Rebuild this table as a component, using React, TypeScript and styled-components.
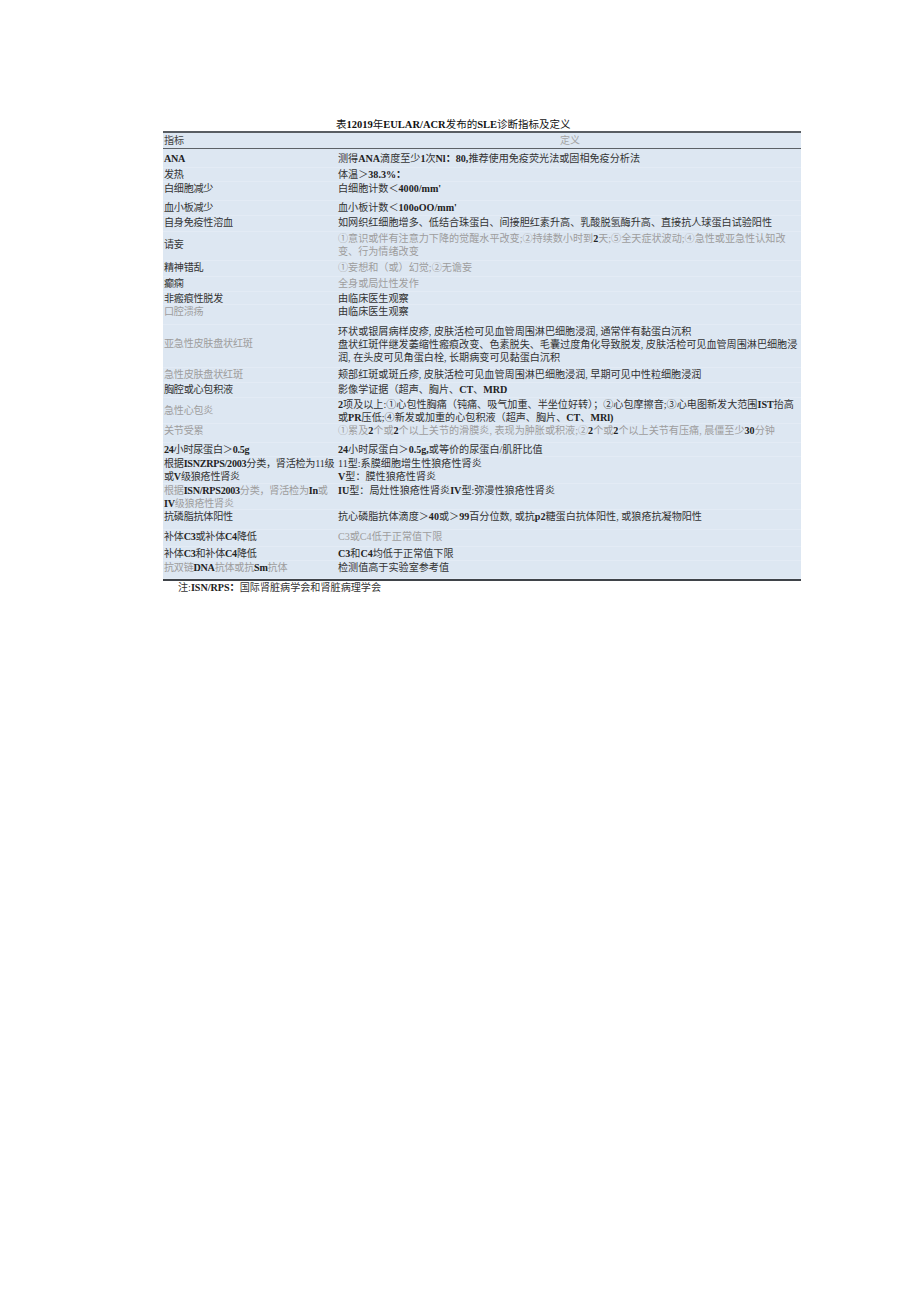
import React from 'react';
import styled, { createGlobalStyle } from 'styled-components';

const GlobalStyle = createGlobalStyle`
  html, body {
    margin: 0;
    padding: 0;
    background: #fff;
  }
  body {
    font-family: "Liberation Serif", "Noto Sans CJK SC", serif;
  }
`

const Page = styled.div`
  width: 920px;
  min-height: 1301px;
  padding-top: 118px;
  box-sizing: border-box;
  display: flex;
  flex-direction: column;
  align-items: flex-start;
`

const TableWrap = styled.div`
  margin-left: 163px;
  width: 638px;
  display: flex;
  flex-direction: column;
`

const Title = styled.div`
  padding-left: 173px;
  height: 13px;
  line-height: 13px;
  font-size: 10.5px;
  color: #111;
  white-space: nowrap;
`

const TitleLatin = styled.b`
  font-weight: 700;
`

const Table = styled.div`
  display: flex;
  flex-direction: column;
  background: #dde7f2;
  border-top: 2px solid #585d63;
  border-bottom: 2px solid #3f4349;
`

const HeaderRow = styled.div`
  display: grid;
  grid-template-columns: 175px 1fr;
  height: 16px;
  line-height: 15px;
  font-size: 10.1px;
  border-bottom: 1.5px solid #5c6167;
  box-sizing: border-box;
`

const HeaderCell = styled.div<{ $center?: boolean }>`
  padding-left: 1px;
  color: ${p => (p.$center ? '#a3a3a3' : '#444')};
  text-align: ${p => (p.$center ? 'center' : 'left')};
`

const Body = styled.div`
  display: flex;
  flex-direction: column;
  padding-top: 3px;
`

const Row = styled.div<{ $h: number }>`
  display: grid;
  grid-template-columns: 175px 1fr;
  align-items: start;
  height: ${p => p.$h}px;
  box-sizing: border-box;
  border-bottom: 1px solid #e3ebf5;
  font-size: 10.1px;
  line-height: 13px;
`

const Label = styled.div<{ $gray?: boolean; $offset?: number }>`
  padding-left: 1px;
  padding-top: ${p => p.$offset ?? 0}px;
  color: ${p => (p.$gray ? '#9d9d9d' : '#333')};
  letter-spacing: -0.25px;
  white-space: nowrap;
`

const Definition = styled.div<{ $gray?: boolean }>`
  color: ${p => (p.$gray ? '#9d9d9d' : '#333')};
  white-space: nowrap;
`

const Line = styled.div`
  height: 13px;
`

const B = styled.b`
  font-weight: 700;
  color: #222;
`

const Note = styled.div`
  padding-left: 15px;
  font-size: 10.1px;
  line-height: 13px;
  color: #333;
  white-space: nowrap;
`

type Item = {
  h: number
  label: React.ReactNode[]
  def: React.ReactNode[]
  labelGray?: boolean
  defGray?: boolean
  offset?: number
}

const rows: Item[] = [
  {
    h: 16,
    label: [<B>ANA</B>],
    def: [<>测得<B>ANA</B>滴度至少<B>1</B>次<B>Nl：80,</B>推荐使用免疫荧光法或固相免疫分析法</>],
  },
  { h: 14, label: ['发热'], def: [<>体温＞<B>38.3%：</B></>] },
  { h: 19, label: ['白细胞减少'], def: [<>白细胞计数＜<B>4000/mm'</B></>] },
  { h: 15, label: ['血小板减少'], def: [<>血小板计数＜<B>100oOO/mm'</B></>] },
  {
    h: 16,
    label: ['自身免疫性溶血'],
    def: ['如网织红细胞增多、低结合珠蛋白、间接胆红素升高、乳酸脱氢酶升高、直接抗人球蛋白试验阳性'],
  },
  {
    h: 29,
    offset: 6,
    label: ['请妄'],
    defGray: true,
    def: [
      <>①意识或伴有注意力下降的觉醒水平改变;②持续数小时到<B>2</B>天;⑤全天症状波动;④急性或亚急性认知改</>,
      '变、行为情绪改变',
    ],
  },
  { h: 16, label: ['精神错乱'], defGray: true, def: ['①妄想和（或）幻觉;②无谵妄'] },
  { h: 15, label: ['癫痫'], defGray: true, def: ['全身或局灶性发作'] },
  { h: 13, label: ['非瘢痕性脱发'], def: ['由临床医生观察'] },
  { h: 20, label: ['口腔溃疡'], labelGray: true, def: ['由临床医生观察'] },
  {
    h: 43,
    offset: 12,
    label: ['亚急性皮肤盘状红斑'],
    labelGray: true,
    def: [
      '环状或银屑病样皮疹, 皮肤活检可见血管周围淋巴细胞浸润, 通常伴有黏蛋白沉积',
      '盘状红斑伴继发萎缩性瘢痕改变、色素脱失、毛囊过度角化导致脱发, 皮肤活检可见血管周围淋巴细胞浸',
      '润, 在头皮可见角蛋白栓, 长期病变可见黏蛋白沉积',
    ],
  },
  {
    h: 15,
    label: ['急性皮肤盘状红斑'],
    labelGray: true,
    def: ['颊部红斑或斑丘疹, 皮肤活检可见血管周围淋巴细胞浸润, 早期可见中性粒细胞浸润'],
  },
  { h: 15, label: ['胸腔或心包积液'], def: [<>影像学证据（超声、胸片、<B>CT</B>、<B>MRD</B></>] },
  {
    h: 26,
    offset: 6,
    label: ['急性心包炎'],
    labelGray: true,
    def: [
      <><B>2</B>项及以上:①心包性胸痛（钝痛、吸气加重、半坐位好转）；②心包摩擦音;③心电图新发大范围<B>IST</B>抬高</>,
      <>或<B>PR</B>压低;④新发或加重的心包积液（超声、胸片、<B>CT</B>、<B>MRl)</B></>,
    ],
  },
  {
    h: 19,
    label: ['关节受累'],
    labelGray: true,
    defGray: true,
    def: [<>①累及<B>2</B>个或<B>2</B>个以上关节的滑膜炎, 表现为肿胀或积液;②<B>2</B>个或<B>2</B>个以上关节有压痛, 晨僵至少<B>30</B>分钟</>],
  },
  {
    h: 14,
    label: [<><B>24</B>小时尿蛋白＞<B>0.5g</B></>],
    def: [<><B>24</B>小时尿蛋白＞<B>0.5g,</B>或等价的尿蛋白/肌肝比值</>],
  },
  {
    h: 27,
    label: [<>根据<B>ISNZRPS/2003</B>分类，肾活检为11级</>, <>或<B>V</B>级狼疮性肾炎</>],
    def: ['11型:系膜细胞增生性狼疮性肾炎', <><B>V</B>型：膜性狼疮性肾炎</>],
  },
  {
    h: 26,
    label: [<>根据<B>ISN/RPS2003</B>分类，肾活检为<B>In</B>或</>, <><B>IV</B>级狼疮性肾炎</>],
    labelGray: true,
    def: [<><B>IU</B>型：局灶性狼疮性肾炎<B>IV</B>型:弥漫性狼疮性肾炎</>],
  },
  {
    h: 20,
    label: ['抗磷脂抗体阳性'],
    def: [<>抗心磷脂抗体滴度＞<B>40</B>或＞<B>99</B>百分位数, 或抗<B>p2</B>糖蛋白抗体阳性, 或狼疮抗凝物阳性</>],
  },
  {
    h: 17,
    label: [<>补体<B>C3</B>或补体<B>C4</B>降低</>],
    defGray: true,
    def: ['C3或C4低于正常值下限'],
  },
  {
    h: 14,
    label: [<>补体<B>C3</B>和补体<B>C4</B>降低</>],
    def: [<><B>C3</B>和<B>C4</B>均低于正常值下限</>],
  },
  {
    h: 17.5,
    label: [<>抗双链<B>DNA</B>抗体或抗<B>Sm</B>抗体</>],
    labelGray: true,
    def: ['检测值高于实验室参考值'],
  },
]

export default function App() {
  return (
    <>
      <GlobalStyle />
      <Page>
        <TableWrap>
          <Title>
            表<TitleLatin>12019</TitleLatin>年<TitleLatin>EULAR/ACR</TitleLatin>发布的<TitleLatin>SLE</TitleLatin>诊断指标及定义
          </Title>
          <Table>
            <HeaderRow>
              <HeaderCell>指标</HeaderCell>
              <HeaderCell $center>定义</HeaderCell>
            </HeaderRow>
            <Body>
              {rows.map((r, i) => (
                <Row key={i} $h={r.h}>
                  <Label $gray={r.labelGray} $offset={r.offset}>
                    {r.label.map((l, j) => (
                      <Line key={j}>{l}</Line>
                    ))}
                  </Label>
                  <Definition $gray={r.defGray}>
                    {r.def.map((d, j) => (
                      <Line key={j}>{d}</Line>
                    ))}
                  </Definition>
                </Row>
              ))}
            </Body>
          </Table>
          <Note>
            注:<B>ISN/RPS：</B>国际肾脏病学会和肾脏病理学会
          </Note>
        </TableWrap>
      </Page>
    </>
  );
}
